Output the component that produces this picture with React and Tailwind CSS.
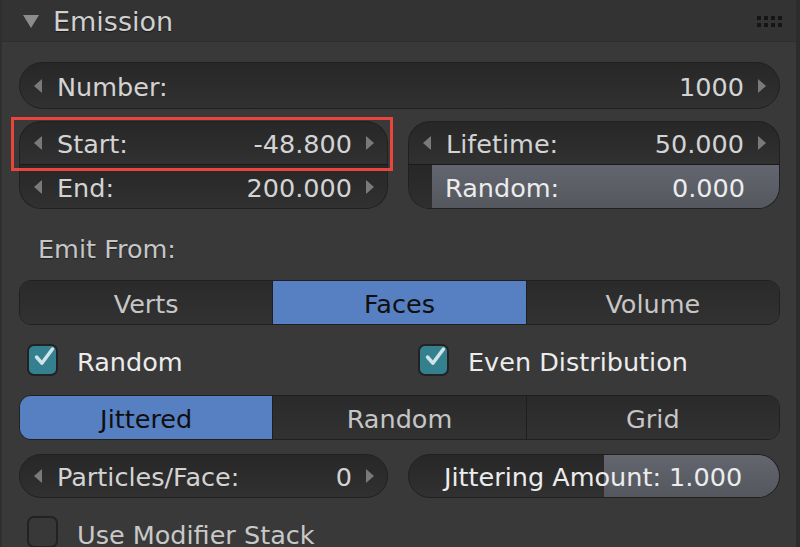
import React from 'react';

const font = { fontFamily: '"DejaVu Sans", "Noto Sans", sans-serif' };

function Arrow({ dir }) {
    return (
        <svg width="10" height="16" viewBox="0 0 10 16" className="shrink-0 -translate-y-[2px]">
            {dir === 'left'
                ? <polygon points="9,1 1,8 9,15" fill="#7a7a7a" />
                : <polygon points="1,1 9,8 1,15" fill="#7a7a7a" />}
        </svg>
    );
}

function NumField({ label, value, className = '' }) {
    return (
        <div className={`flex items-center h-[44px] pt-[4px] pl-[13px] pr-[12px] bg-gradient-to-b from-[#272727] to-[#313131] border border-[#202020] text-[#d3d3d3] ${className}`}>
            <Arrow dir="left" />
            <span className="ml-[14px] flex-1">{label}</span>
            <span className="mr-[13px]">{value}</span>
            <Arrow dir="right" />
        </div>
    );
}

function Check({ on }) {
    return (
        <div className={`w-[31px] h-[32px] rounded-[7px] border-2 border-[#222] flex items-center justify-center shrink-0 ${on ? 'bg-[#34808f]' : 'bg-[#383838]'}`}>
            {on && (
                <svg width="26" height="26" viewBox="0 0 26 26" className="-mt-[6px] ml-[4px]">
                    <path d="M4 13 L10 20 L22 4" stroke="#cfe3e8" strokeWidth="4" fill="none" strokeLinecap="round" strokeLinejoin="round" />
                </svg>
            )}
        </div>
    );
}

function Segmented({ items, active }) {
    return (
        <div className="flex h-[45px] rounded-[12px] border border-[#202020] overflow-hidden">
            {items.map((it, i) => (
                <div
                    key={it}
                    className={`flex-1 flex items-center justify-center pt-[5px] ${i > 0 ? 'border-l border-[#1e1e1e]' : ''} ${i === active ? 'bg-[#5680c2] text-[#0f0f0f]' : 'bg-gradient-to-b from-[#2a2a2a] to-[#323232] text-[#c6c6c6]'}`}
                >
                    {it}
                </div>
            ))}
        </div>
    );
}

export default function App() {
    return (
        <div className="w-[800px] h-[547px] overflow-hidden bg-[#393939] text-[25.5px] leading-none border-l-2 border-[#2f2f2f] border-r-4 border-r-[#2c2c2c]" style={font}>
            {/* Header */}
            <div className="h-[42px] bg-[#333333] flex items-center pl-[20px] pr-[14px] border-b border-[#2e2e2e]">
                <svg width="18" height="16" viewBox="0 0 18 16"><polygon points="1,2 17,2 9,15" fill="#8c8c8c" /></svg>
                <span className="ml-[13px] text-[#d0d0d0] text-[27px] translate-y-[1px] [text-shadow:0_1px_1px_#1a1a1a]">Emission</span>
                <div className="flex-1" />
                <div className="grid grid-cols-4 gap-x-[3px] gap-y-[3px] mt-[2px]">
                    {Array.from({ length: 8 }).map((_, i) => (
                        <div key={i} className="w-[4px] h-[4px] bg-[#151515]" />
                    ))}
                </div>
            </div>

            <div className="pl-[17px] pr-[16px]">
                {/* Number */}
                <NumField label="Number:" value="1000" className="mt-[20px] h-[47px] rounded-full" />

                {/* Start/End + Lifetime/Random */}
                <div className="flex gap-[20px] mt-[12px]">
                    <div className="w-[369px] relative">
                        <NumField label="Start:" value="-48.800" className="rounded-t-[22px] border-b-[#1a1a1a]" />
                        <NumField label="End:" value="200.000" className="rounded-b-[22px] border-t-0" />
                        <div className="absolute -left-[8px] -top-[4px] w-[382px] h-[54px] border-[3px] border-[#e8453c]" />
                    </div>
                    <div className="flex-1">
                        <NumField label="Lifetime:" value="50.000" className="rounded-t-[22px] border-b-[#1a1a1a]" />
                        <div className="h-[44px] flex rounded-b-[22px] border border-t-0 border-[#202020] overflow-hidden">
                            <div className="w-[23px] bg-gradient-to-b from-[#272727] to-[#2f2f2f]" />
                            <div className="flex-1 flex items-center pt-[4px] pl-[13px] pr-[34px] bg-gradient-to-b from-[#64666f] to-[#55575f] text-[#ececec]">
                                <span className="flex-1">Random:</span>
                                <span>0.000</span>
                            </div>
                        </div>
                    </div>
                </div>

                {/* Emit From */}
                <div className="h-[71px] flex items-center pt-[10px] pl-[19px] text-[#c6c6c6] [text-shadow:0_1px_1px_#1f1f1f]">Emit From:</div>

                <Segmented items={['Verts', 'Faces', 'Volume']} active={1} />

                {/* Checkboxes */}
                <div className="flex h-[70px] items-center">
                    <div className="w-[399px] flex items-center pl-[8px]">
                        <Check on />
                        <span className="ml-[19px] text-[#ececec] translate-y-[3px]">Random</span>
                    </div>
                    <div className="flex items-center">
                        <Check on />
                        <span className="ml-[19px] text-[#ececec] translate-y-[3px]">Even Distribution</span>
                    </div>
                </div>

                <Segmented items={['Jittered', 'Random', 'Grid']} active={0} />

                {/* Particles/Face + Jittering */}
                <div className="flex gap-[20px] mt-[14px]">
                    <NumField label="Particles/Face:" value="0" className="w-[369px] rounded-full" />
                    <div className="flex-1 h-[44px] relative rounded-full border border-[#202020] overflow-hidden bg-gradient-to-b from-[#272727] to-[#313131]">
                        <div className="absolute right-0 top-0 bottom-0 w-[175px] bg-gradient-to-b from-[#64666f] to-[#55575f]" />
                        <div className="relative h-full flex items-center justify-center pt-[4px] text-[#ececec] pr-[2px]">Jittering Amount: 1.000</div>
                    </div>
                </div>

                {/* Use Modifier Stack */}
                <div className="flex items-center pl-[8px] mt-[18px]">
                    <Check />
                    <span className="ml-[19px] text-[#c8c8c8] translate-y-[4px]">Use Modifier Stack</span>
                </div>
            </div>
        </div>
    );
}
